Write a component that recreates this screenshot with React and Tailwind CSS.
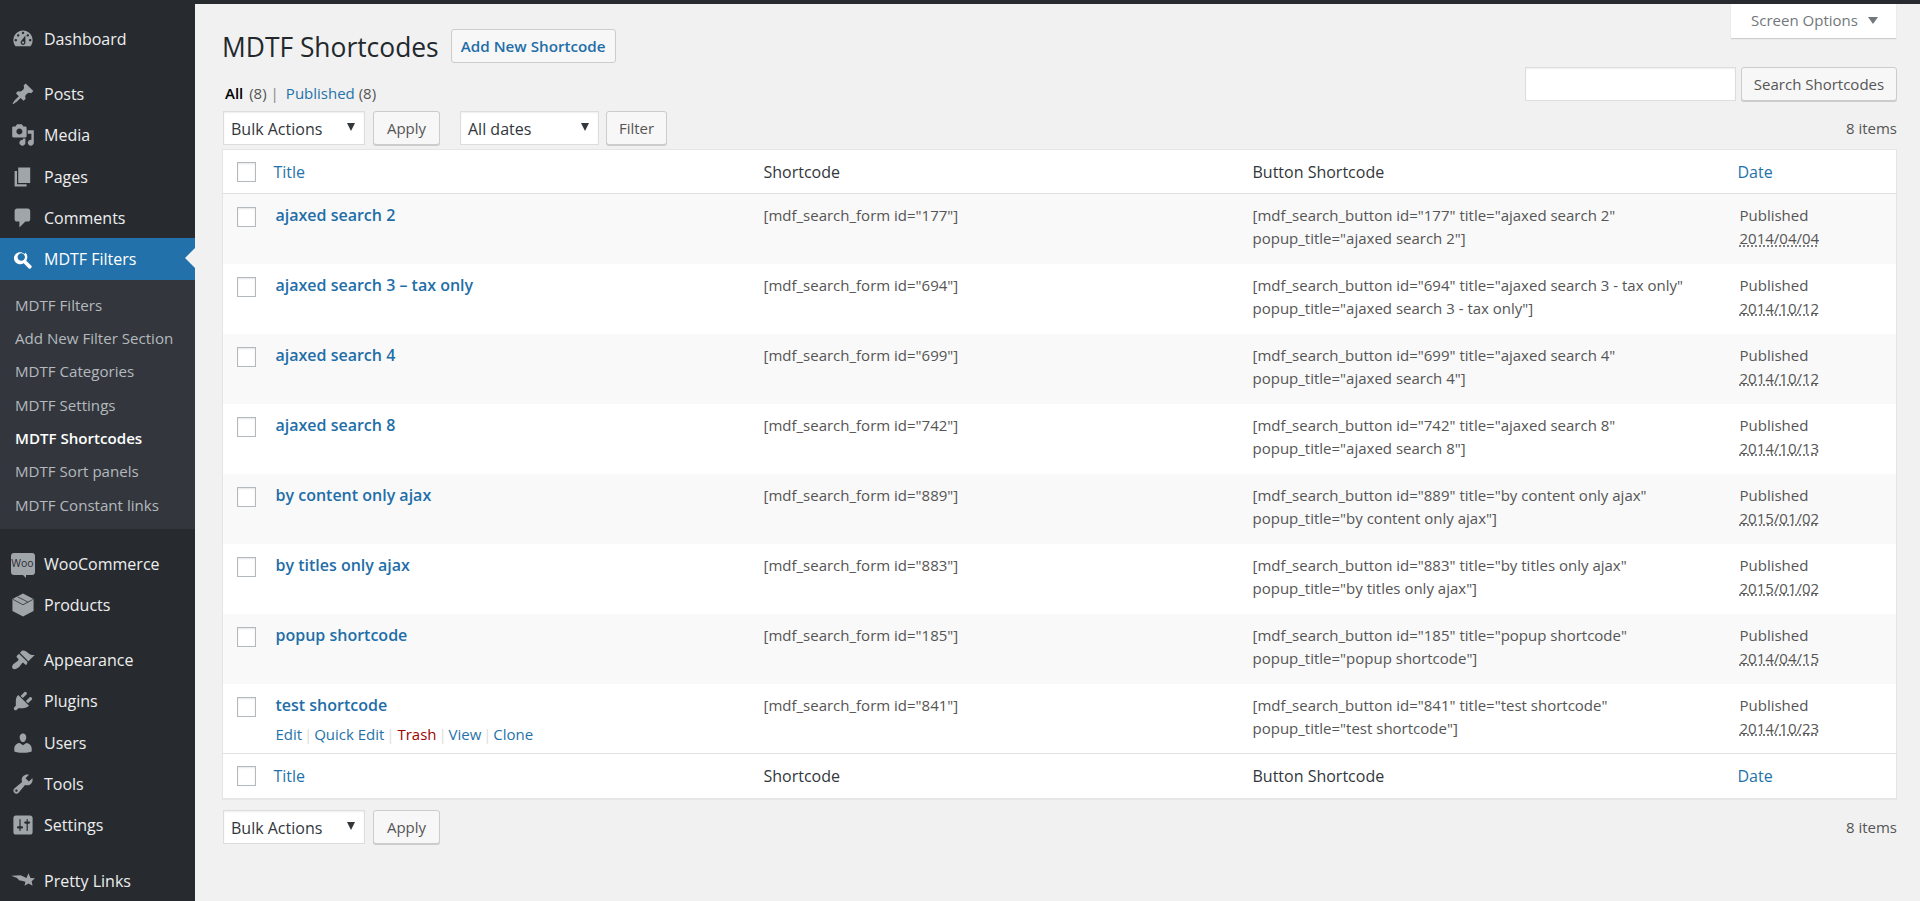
const font = { fontFamily: '"Open Sans", "Noto Sans", sans-serif' };

const icons = {
  dashboard: 'M3.76 16h12.48c1.1-1.37 1.76-3.11 1.76-5 0-4.42-3.58-8-8-8s-8 3.58-8 8c0 1.89.66 3.63 1.76 5zM10 4c.55 0 1 .45 1 1s-.45 1-1 1-1-.45-1-1 .45-1 1-1zM6 6c.55 0 1 .45 1 1s-.45 1-1 1-1-.45-1-1 .45-1 1-1zm8 0c.55 0 1 .45 1 1s-.45 1-1 1-1-.45-1-1 .45-1 1-1zm-5.37 5.55L12 7v6c0 1.1-.9 2-2 2s-2-.9-2-2c0-.57.24-1.08.63-1.45zM4 10c.55 0 1 .45 1 1s-.45 1-1 1-1-.45-1-1 .45-1 1-1zm12 0c.55 0 1 .45 1 1s-.45 1-1 1-1-.45-1-1 .45-1 1-1zm-5 3c0-.55-.45-1-1-1s-1 .45-1 1 .45 1 1 1 1-.45 1-1z',
  post: 'M10.44 3.02l1.82-1.82 6.36 6.35-1.83 1.82c-1.05-.68-2.48-.57-3.41.36l-.75.75c-.92.93-1.04 2.35-.35 3.41l-1.83 1.82-2.41-2.41-2.8 2.79c-.42.42-3.38 2.71-3.8 2.29s1.86-3.39 2.28-3.81l2.79-2.79L4.1 9.36l1.83-1.82c1.05.69 2.48.57 3.4-.36l.75-.75c.93-.92 1.05-2.35.36-3.41z',
  media: 'M13 11V4c0-.55-.45-1-1-1h-1.67L9 1H5L3.67 3H2c-.55 0-1 .45-1 1v7c0 .55.45 1 1 1h10c.55 0 1-.45 1-1zM7 4.5c1.38 0 2.5 1.12 2.5 2.5S8.38 9.5 7 9.5 4.5 8.38 4.5 7 5.62 4.5 7 4.5zM14 6h5v10.5c0 1.38-1.12 2.5-2.5 2.5S14 17.88 14 16.5s1.12-2.5 2.5-2.5c.17 0 .34.02.5.05V9h-3V6zm-4 8.05V13h2v3.5c0 1.38-1.12 2.5-2.5 2.5S7 17.88 7 16.5 8.12 14 9.5 14c.17 0 .34.02.5.05z',
  page: 'M6 15V2h10v13H6zm-1 1h8v2H3V5h2v11z',
  comments: 'M5 2h9c1.1 0 2 .9 2 2v7c0 1.1-.9 2-2 2h-2l-5 5v-5H5c-1.1 0-2-.9-2-2V4c0-1.1.9-2 2-2z',
  search: 'M12.14 4.78c1.8 1.8 1.98 4.62.56 6.63l4.3 4.3c.39.39.39 1.02 0 1.41l-.71.71c-.39.39-1.02.39-1.41 0l-4.3-4.3c-2.01 1.42-4.83 1.24-6.63-.56-1.98-1.98-1.98-5.2 0-7.18s5.2-1.98 7.18 0zm-1.41 1.41c-1.2-1.2-3.16-1.2-4.36 0s-1.2 3.16 0 4.36 3.16 1.2 4.36 0 1.2-3.16 0-4.36z',
  appearance: 'M14.48 11.06L7.41 3.99l1.5-1.5c.5-.56 2.3-.47 3.51.32 1.21.8 1.43 1.28 2.91 2.1 1.18.64 2.45 1.26 4.45.85zm-.71.71L6.7 4.7 4.93 6.47c-.39.39-.39 1.02 0 1.41l1.06 1.06c.39.39.39 1.03 0 1.42-.6.6-1.43 1.11-2.21 1.69-.35.26-.7.53-1.01.84C1.43 13.23.28 16 1.45 17.17c1.17 1.17 3.94.02 5.28-1.32.31-.31.58-.66.84-1.01.58-.78 1.09-1.61 1.69-2.21.39-.39 1.03-.39 1.42 0l1.06 1.06c.39.39 1.02.39 1.41 0z',
  plugins: 'M13.11 4.36L9.87 7.6 8 5.73l3.24-3.24c.35-.34 1.05-.2 1.56.32.52.51.66 1.21.31 1.55zm-8 1.77l.91-1.12 9.01 9.01-1.19.84c-.71.71-2.63 1.16-3.82 1.16H6.14L4.9 17.26c-.59.59-1.54.59-2.12 0-.59-.58-.59-1.53 0-2.12l1.24-1.24v-3.88c0-1.13.4-3.19 1.09-3.89zm7.26 3.97l3.24-3.24c.34-.35 1.04-.21 1.55.31.52.51.66 1.21.31 1.55l-3.24 3.25z',
  users: 'M10 9.25c-2.27 0-2.73-3.44-2.73-3.44C7 4.02 7.82 2 9.97 2c2.16 0 2.98 2.02 2.71 3.81 0 0-.41 3.44-2.68 3.44zm0 2.57L12.72 10c2.39 0 4.52 2.33 4.52 4.53v2.49s-3.65 1.13-7.24 1.13c-3.65 0-7.24-1.13-7.24-1.13v-2.49c0-2.25 1.94-4.48 4.47-4.48z',
  tools: 'M16.68 9.77c-1.34 1.34-3.3 1.67-4.95.99l-5.41 6.52c-.99.99-2.59.99-3.58 0s-.99-2.59 0-3.57l6.52-5.42c-.68-1.65-.35-3.61.99-4.95 1.28-1.28 3.12-1.62 4.72-1.06l-2.89 2.89 2.82 2.82 2.86-2.87c.53 1.58.18 3.39-1.08 4.65zM3.81 16.21c.4.39 1.04.39 1.43 0 .4-.4.4-1.04 0-1.43-.39-.4-1.03-.4-1.43 0-.39.39-.39 1.03 0 1.43z',
  settings: 'M18 16V4c0-1.1-.9-2-2-2H4c-1.1 0-2 .9-2 2v12c0 1.1.9 2 2 2h12c1.1 0 2-.9 2-2zM8 11h1c.55 0 1 .45 1 1s-.45 1-1 1H8v1.5c0 .28-.22.5-.5.5s-.5-.22-.5-.5V13H6c-.55 0-1-.45-1-1s.45-1 1-1h1V5.5c0-.28.22-.5.5-.5s.5.22.5.5V11zm5-2h-1c-.55 0-1-.45-1-1s.45-1 1-1h1V5.5c0-.28.22-.5.5-.5s.5.22.5.5V7h1c.55 0 1 .45 1 1s-.45 1-1 1h-1v5.5c0 .28-.22.5-.5.5s-.5-.22-.5-.5V9z',
  prettylinks: 'M.2 5.6L8 5.2l4.9 2.2 1.7-3.8 1.6 3.8 3.8.3-2.8 2.5.8 3.8-3.4-2-3.3 2 .7-3.4-4-1-1-.1-2-2z',
};

const shortcodes = [
  { id: 177, title: 'ajaxed search 2', plain: 'ajaxed search 2', date: '2014/04/04' },
  { id: 694, title: 'ajaxed search 3 – tax only', plain: 'ajaxed search 3 - tax only', date: '2014/10/12' },
  { id: 699, title: 'ajaxed search 4', plain: 'ajaxed search 4', date: '2014/10/12' },
  { id: 742, title: 'ajaxed search 8', plain: 'ajaxed search 8', date: '2014/10/13' },
  { id: 889, title: 'by content only ajax', plain: 'by content only ajax', date: '2015/01/02' },
  { id: 883, title: 'by titles only ajax', plain: 'by titles only ajax', date: '2015/01/02' },
  { id: 185, title: 'popup shortcode', plain: 'popup shortcode', date: '2014/04/15' },
  { id: 841, title: 'test shortcode', plain: 'test shortcode', date: '2014/10/23' },
];

const subItems = ['MDTF Filters', 'Add New Filter Section', 'MDTF Categories', 'MDTF Settings', 'MDTF Shortcodes', 'MDTF Sort panels', 'MDTF Constant links'];

function Icon({ name, className = 'text-[#a0a5aa]' }) {
  return (
    <svg viewBox="0 0 20 20" className={`w-6 h-6 fill-current ${className}`}>
      <path d={icons[name]} fillRule="evenodd" />
    </svg>
  );
}

function MenuItem({ icon, label }) {
  return (
    <div className="flex items-center h-[41.3px] text-[16px] text-[#eeeeee]">
      <div className="w-[44px] flex justify-center pl-[1px]"><Icon name={icon} /></div>
      <span>{label}</span>
    </div>
  );
}

function WooItem() {
  return (
    <div className="flex items-center h-[41.3px] text-[16px] text-[#eeeeee]">
      <div className="w-[44px] flex justify-center pl-[1px]">
        <div className="relative w-6 h-[22px] rounded-[3px] bg-[#a0a5aa] flex items-center justify-center">
          <span className="text-[10.5px] leading-none text-[#2a2e33]">Woo</span>
          <div className="absolute bottom-[-3px] left-[12px] w-0 h-0 border-t-[3px] border-l-[3px] border-t-[#a0a5aa] border-l-transparent" />
        </div>
      </div>
      <span>WooCommerce</span>
    </div>
  );
}

function ProductsItem() {
  return (
    <div className="flex items-center h-[41.3px] text-[16px] text-[#eeeeee]">
      <div className="w-[44px] flex justify-center pl-[1px]">
        <svg viewBox="0 0 20 20" className="w-6 h-6">
          <path d="M10 .5l8.8 4.6v9.8L10 19.5l-8.8-4.6V5.1z" fill="#a0a5aa" />
          <path d="M1.6 5.3L10 9.8l8.4-4.5M5.6 3.2l8.6 4.4" fill="none" stroke="#32363b" strokeWidth=".7" />
        </svg>
      </div>
      <span>Products</span>
    </div>
  );
}

function Sidebar() {
  return (
    <aside className="w-[195px] shrink-0 bg-[#272b30] pt-[14px] overflow-hidden">
      <MenuItem icon="dashboard" label="Dashboard" />
      <div className="h-[14px]" />
      <MenuItem icon="post" label="Posts" />
      <MenuItem icon="media" label="Media" />
      <MenuItem icon="page" label="Pages" />
      <MenuItem icon="comments" label="Comments" />
      <div className="relative flex items-center h-[41.3px] bg-[#2271aa] text-[16px] text-white">
        <div className="w-[44px] flex justify-center pl-[1px]"><Icon name="search" className="text-white" /></div>
        <span>MDTF Filters</span>
        <div className="absolute right-0 top-[10px] w-0 h-0 border-y-[10px] border-r-[10px] border-y-transparent border-r-[#f1f1f1]" />
      </div>
      <ul className="bg-[#33373d] pt-[9px] pb-[7px] text-[15.1px] text-[#b4b9be]">
        {subItems.map(item => (
          <li key={item} className={`h-[33.3px] leading-[33.3px] pl-[15px] ${item === 'MDTF Shortcodes' ? 'text-white font-semibold' : ''}`}>{item}</li>
        ))}
      </ul>
      <div className="h-[14px]" />
      <WooItem />
      <ProductsItem />
      <div className="h-[14px]" />
      <MenuItem icon="appearance" label="Appearance" />
      <MenuItem icon="plugins" label="Plugins" />
      <MenuItem icon="users" label="Users" />
      <MenuItem icon="tools" label="Tools" />
      <MenuItem icon="settings" label="Settings" />
      <div className="h-[14px]" />
      <MenuItem icon="prettylinks" label="Pretty Links" />
    </aside>
  );
}

function FakeSelect({ label, width }) {
  return (
    <div className={`flex items-center justify-between h-[34px] pl-[7px] pr-[9px] bg-white border border-[#dddddd] shadow-[inset_0_1px_2px_rgba(0,0,0,0.07)] text-[16px] text-[#32373c] ${width}`}>
      <span className="pt-[1px]">{label}</span>
      <div className="w-0 h-0 border-x-[4px] border-t-[8px] border-x-transparent border-t-[#32373c] -translate-y-[1px]" />
    </div>
  );
}

function Button({ children, className = '' }) {
  return (
    <button className={`h-[34px] rounded-[3px] border border-[#cccccc] bg-[#f7f7f7] shadow-[0_1px_0_#cccccc] text-[15px] text-[#555555] pt-[1px] ${className}`}>
      {children}
    </button>
  );
}

function Checkbox() {
  return <div className="w-[19px] h-[20px] bg-white border border-[#b4b9be] shadow-[inset_0_1px_2px_rgba(0,0,0,0.1)]" />;
}

function HeadRow({ border, height }) {
  return (
    <tr className={`text-[16px] ${height} ${border}`}>
      <td className="pl-[14px]"><Checkbox /></td>
      <td className="pl-[8px] text-[#1f73aa]">Title</td>
      <td className="pl-[11px] text-[#32373c]">Shortcode</td>
      <td className="pl-[11px] text-[#32373c]">Button Shortcode</td>
      <td className="pl-[8px] text-[#1f73aa]">Date</td>
    </tr>
  );
}

function Sep() {
  return <span className="inline-block w-[12px] text-center text-[#dddddd]">|</span>;
}

function Row({ row, index, showActions }) {
  return (
    <tr className={`h-[70px] align-top text-[15px] text-[#555555] ${index % 2 === 0 ? 'bg-[#f9f9f9]' : 'bg-white'}`}>
      <td className="pl-[14px] pt-[13px]"><Checkbox /></td>
      <td className="px-[10px] pt-[8px]">
        <div className="text-[16px] font-semibold text-[#1f6ea8] leading-[26px]">{row.title}</div>
        {showActions && (
          <div className="mt-[5px] leading-[22px] text-[#1f73aa]">
            Edit<Sep />Quick Edit<Sep /><span className="text-[#a00000] ml-[1px]">Trash</span><Sep />View<Sep />Clone
          </div>
        )}
      </td>
      <td className="pl-[11px] pr-[10px] pt-[10px] leading-[23.4px]">[mdf_search_form id="{row.id}"]</td>
      <td className="pl-[11px] pr-[10px] pt-[10px] leading-[23.4px]">
        [mdf_search_button id="{row.id}" title="{row.plain}"<br />popup_title="{row.plain}"]
      </td>
      <td className="px-[10px] pt-[10px] leading-[23.4px]">
        Published<br />
        <span className="underline decoration-dotted decoration-[#555555] underline-offset-1">{row.date}</span>
      </td>
    </tr>
  );
}

export default function App() {
  return (
    <div style={font} className="h-[901px] overflow-hidden flex flex-col bg-[#f1f1f1]">
      <div className="h-1 bg-[#272b30] shrink-0" />
      <div className="flex flex-1 min-h-0">
        <Sidebar />
        <main className="relative flex-1 pl-[27px] pr-[23px]">
          <div className="absolute right-[24px] top-0 w-[165px] h-[34px] pb-[2px] pl-[2px] bg-white shadow-[0_1px_1px_rgba(0,0,0,0.15)] flex items-center justify-center gap-[10px] text-[15px] text-[#72777c]">
            Screen Options
            <div className="w-0 h-0 border-x-[5px] border-t-[7px] border-x-transparent border-t-[#72777c]" />
          </div>

          <div className="flex items-center h-[34px] mt-[25px]">
            <h1 className="text-[26.4px] text-[#23282d] leading-none pt-[3px]">MDTF Shortcodes</h1>
            <button className="ml-[12px] w-[165px] h-[34px] rounded-[3px] border border-[#cccccc] bg-[#f7f7f7] text-[15.2px] font-semibold text-[#1f6ea8]">Add New Shortcode</button>
          </div>

          <div className="flex items-start justify-between mt-[4px] h-[44px]">
            <div className="text-[15px] text-[#555555] pl-[3px] pt-[15px]">
              <span className="text-black font-semibold mr-[2px]">All</span> (8)<span className="ml-[4px] mr-[7px] text-[#888888]">|</span><span className="text-[#1f73aa]">Published</span> (8)
            </div>
            <div className="flex gap-[5px]">
              <div className="w-[211px] h-[34px] bg-white border border-[#dddddd] shadow-[inset_0_1px_2px_rgba(0,0,0,0.07)]" />
              <Button className="w-[156px]">Search Shortcodes</Button>
            </div>
          </div>

          <div className="flex items-center h-[34px] pl-[1px]">
            <FakeSelect label="Bulk Actions" width="w-[142px]" />
            <Button className="ml-[8px] w-[67px]">Apply</Button>
            <FakeSelect label="All dates" width="w-[139px] ml-[20px]" />
            <Button className="ml-[7px] w-[61px]">Filter</Button>
            <span className="ml-auto pt-[1px] text-[15px] text-[#555555]">8 items</span>
          </div>

          <table className="mt-[4px] w-full table-fixed bg-white border border-[#e5e5e5] shadow-[0_1px_1px_rgba(0,0,0,0.04)] border-collapse">
            <colgroup>
              <col className="w-[43px]" />
              <col className="w-[487px]" />
              <col className="w-[489px]" />
              <col className="w-[488px]" />
              <col />
            </colgroup>
            <thead><HeadRow height="h-[44px]" border="border-b border-[#e1e1e1]" /></thead>
            <tbody>
              {shortcodes.map((row, i) => (
                <Row key={row.id} row={row} index={i} showActions={i === shortcodes.length - 1} />
              ))}
            </tbody>
            <tfoot><HeadRow height="h-[45px]" border="border-t border-[#e1e1e1]" /></tfoot>
          </table>

          <div className="flex items-center h-[34px] mt-[11px] pl-[1px]">
            <FakeSelect label="Bulk Actions" width="w-[142px]" />
            <Button className="ml-[8px] w-[67px]">Apply</Button>
            <span className="ml-auto pt-[1px] text-[15px] text-[#555555]">8 items</span>
          </div>
        </main>
      </div>
    </div>
  );
}
